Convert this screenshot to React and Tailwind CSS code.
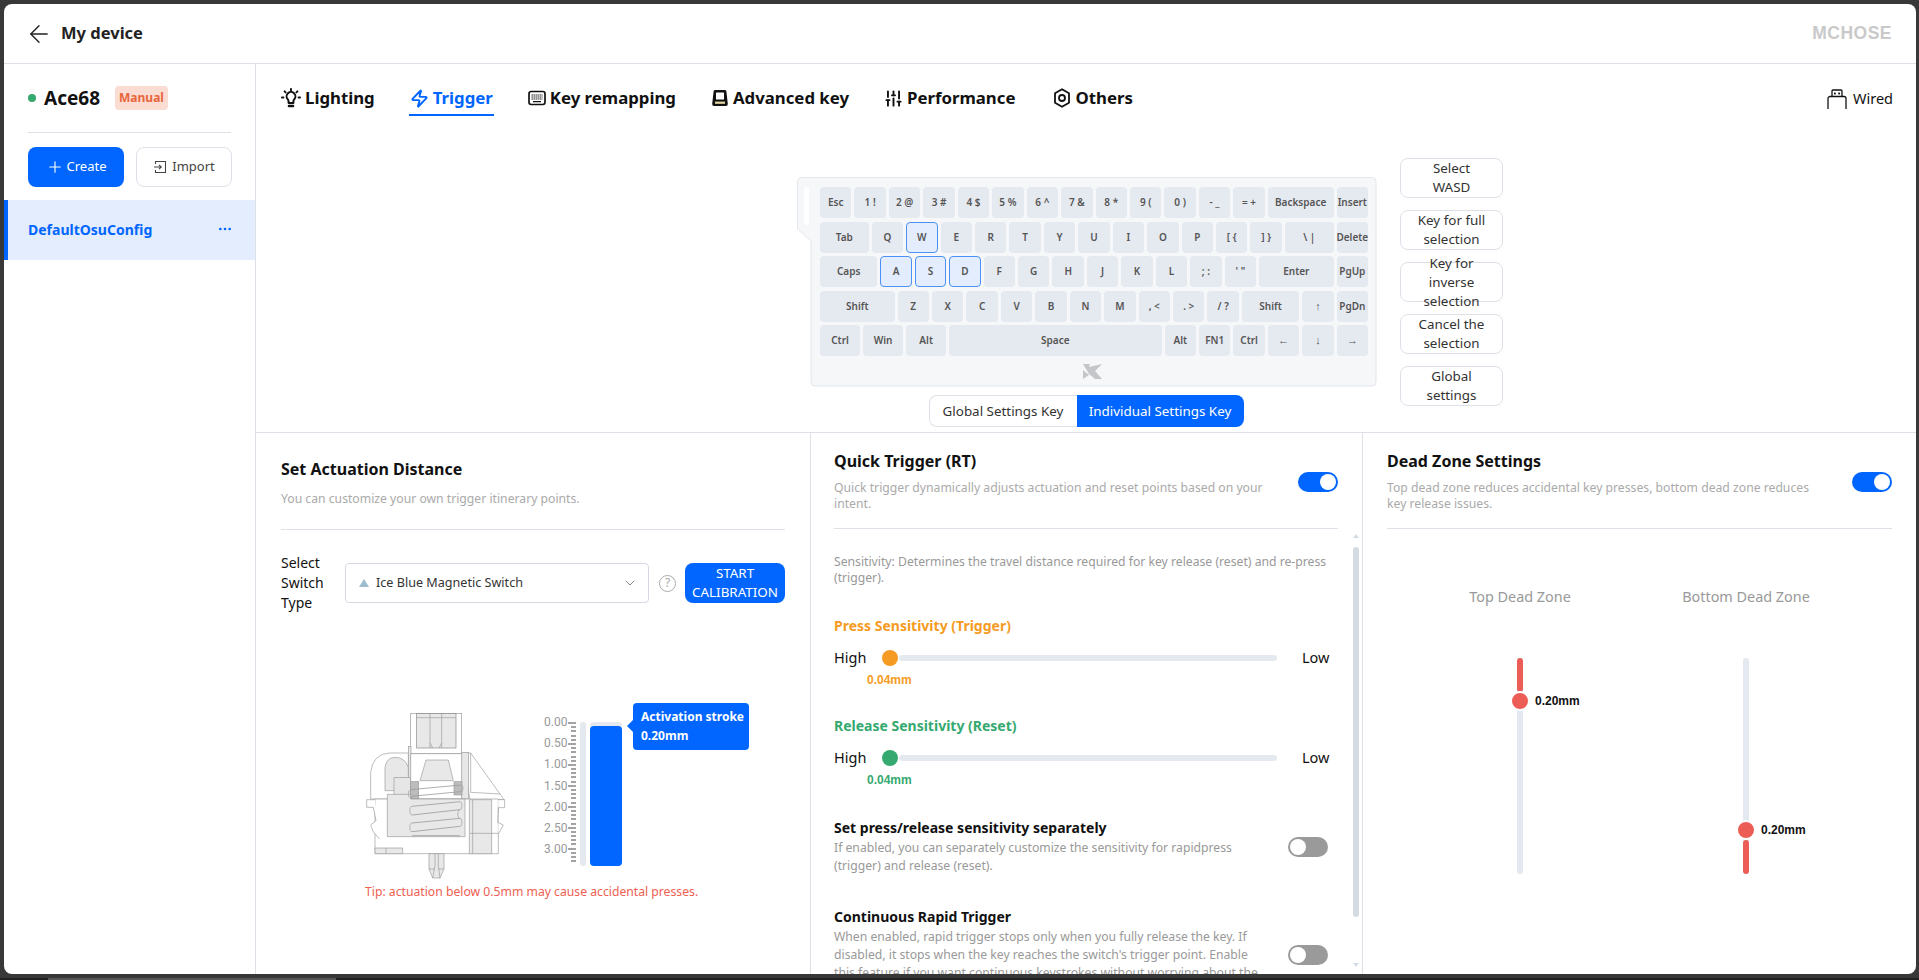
import React from 'react'
import { ArrowLeft, Plus, Zap, SlidersVertical, ChevronDown, Ellipsis } from 'lucide-react'

const UNIT = 34.45

const rows = [
  [['Esc'], ['1 !'], ['2 @'], ['3 #'], ['4 $'], ['5 %'], ['6 ^'], ['7 &'], ['8 *'], ['9 ('], ['0 )'], ['- _'], ['= +'], ['Backspace', 2], ['Insert']],
  [['Tab', 1.5], ['Q'], ['W', 1, true], ['E'], ['R'], ['T'], ['Y'], ['U'], ['I'], ['O'], ['P'], ['[ {'], ['] }'], ['\\ |', 1.5], ['Delete']],
  [['Caps', 1.75], ['A', 1, true], ['S', 1, true], ['D', 1, true], ['F'], ['G'], ['H'], ['J'], ['K'], ['L'], ['; :'], ["' \""], ['Enter', 2.25], ['PgUp']],
  [['Shift', 2.25], ['Z'], ['X'], ['C'], ['V'], ['B'], ['N'], ['M'], [', <'], ['. >'], ['/ ?'], ['Shift', 1.75], ['↑'], ['PgDn']],
  [['Ctrl', 1.25], ['Win', 1.25], ['Alt', 1.25], ['Space', 6.25], ['Alt'], ['FN1'], ['Ctrl'], ['←'], ['↓'], ['→']],
]

const arrows = ['←', '↓', '→', '↑']

function Toggle({ on, className = '' }) {
  return (
    <div className={`w-10 h-5 rounded-full flex items-center px-[2px] shrink-0 ${on ? 'bg-[#0066ff] justify-end' : 'bg-[#9a9a9a] justify-start'} ${className}`}>
      <div className="w-4 h-4 rounded-full bg-white" />
    </div>
  )
}

function BulbIcon() {
  return (
    <svg width="20" height="20" viewBox="0 0 20 20" fill="none" stroke="#111" strokeWidth="2" strokeLinecap="round" strokeLinejoin="round">
      <path d="M7.6 15v-1.6c0-1-.4-1.5-1-2.2a4.4 4.4 0 1 1 6.8 0c-.6.7-1 1.2-1 2.2V15z" />
      <path d="M8 18h4" strokeWidth="2.6" />
      <path d="M10 1v1.2M3.6 3.4l1 1M16.4 3.4l-1 1M1 9.6h1.4M17.6 9.6H19" />
    </svg>
  )
}

function KeyboardIcon() {
  return (
    <svg width="18" height="18" viewBox="0 0 18 18" fill="none">
      <rect x="1" y="2.5" width="16" height="13" rx="2.2" stroke="#111" strokeWidth="1.7" />
      <path d="M3.5 6h11M3.5 8h11M3.5 10h11" stroke="#111" strokeWidth="1.2" strokeDasharray="1.4 .6" />
      <path d="M5 12.6h8" stroke="#111" strokeWidth="1.4" />
    </svg>
  )
}

function KeycapIcon() {
  return (
    <svg width="18" height="18" viewBox="0 0 18 18" fill="none">
      <path d="M4.2 1h9.6a1.6 1.6 0 0 1 1.6 1.4l1.4 12.4A2 2 0 0 1 14.8 17H3.2a2 2 0 0 1-2-2.2L2.6 2.4A1.6 1.6 0 0 1 4.2 1z" fill="#111" />
      <rect x="5" y="3.5" width="8" height="7" rx=".6" fill="#fff" />
      <rect x="4" y="12.6" width="10" height="2.2" fill="#e8d9a8" />
    </svg>
  )
}

function HexIcon() {
  return (
    <svg width="18" height="20" viewBox="0 0 18 20" fill="none" stroke="#111" strokeWidth="1.8" strokeLinejoin="round">
      <path d="M9 1.2l7 4v9.6l-7 4-7-4V5.2z" />
      <circle cx="9" cy="10" r="3" />
    </svg>
  )
}

function UsbIcon() {
  return (
    <svg width="20" height="20" viewBox="0 0 20 20" fill="none" stroke="#111" strokeWidth="1.3">
      <path d="M5 7.5V2a1 1 0 0 1 1-1h8a1 1 0 0 1 1 1v5.5" />
      <path d="M1 20V9.5A2 2 0 0 1 3 7.5h14a2 2 0 0 1 2 2V20" />
      <rect x="7" y="3.6" width="1.8" height="1.8" fill="#111" stroke="none" />
      <rect x="11.2" y="3.6" width="1.8" height="1.8" fill="#111" stroke="none" />
    </svg>
  )
}

function ImportIcon() {
  return (
    <svg width="14" height="14" viewBox="0 0 14 14" fill="none" stroke="#444" strokeWidth="1.1">
      <path d="M2.5 4V1.5h10v11h-10V10" />
      <path d="M1 7h7M6 4.8L8.3 7 6 9.2" />
    </svg>
  )
}

function Tab({ icon, label, active, className = '' }) {
  return (
    <div className={`flex items-center gap-[4px] h-[34px] border-b-2 px-[1px] ${active ? 'border-[#0066ff] text-[#0066ff]' : 'border-transparent text-[#111]'} ${className}`}>
      {icon}
      <span className="text-[16.8px] font-bold">{label}</span>
    </div>
  )
}

function SwitchDrawing() {
  const line = '#9b9b9b'
  return (
    <svg width="140" height="166" viewBox="78 62 420 498" fill="none" stroke={line} strokeWidth="2">
      <rect x="212" y="64" width="153" height="120" fill="#fff" />
      <rect x="230" y="64" width="118" height="103" fill="#e8e8e8" stroke="#888" />
      <path d="M270 64v103M305 64v103M230 76h118M270 152l8 15M305 152l-8 15" />
      <path d="M92 320V240Q98 184 150 182H205V320z" fill="#fff" />
      <path d="M135 295V225Q140 195 165 195Q195 195 205 225V295z" fill="#e8e8e8" />
      <path d="M365 182H392L480 305L492 322H390z" fill="#fff" />
      <path d="M392 182V300L480 305" />
      <rect x="205" y="162" width="8" height="158" fill="#e8e8e8" />
      <rect x="365" y="180" width="20" height="140" fill="#e8e8e8" />
      <path d="M212 184H365V320H212z" fill="#fff" />
      <path d="M240 265L258 203H325L340 265z" fill="#e8e8e8" />
      <rect x="162" y="256" width="50" height="62" fill="#e6e6e6" />
      <rect x="212" y="268" width="24" height="50" fill="#bcbcbc" />
      <rect x="342" y="268" width="24" height="40" fill="#bcbcbc" />
      <path d="M105 320H475V484H105z" fill="#fff" />
      <path d="M142 306H212V320H375V433H142z" fill="#e8e8e8" />
      <path d="M388 322H455V484H388z" fill="#e8e8e8" />
      <path d="M398 322V484M390 423H475" />
      <path d="M212 292L362 278M212 312L362 298M216 342L360 328M216 368L360 352M216 392L360 378M216 418L360 402M216 430L360 430" strokeWidth="2.4" />
      <path d="M212 292a6 8 0 0 0 4 24M362 278a6 8 0 0 1 0 20M216 342a6 12 0 0 0 0 26M360 352a6 12 0 0 0 0 26M216 392a6 12 0 0 0 0 26M360 328a6 12 0 0 1 0 24M360 378a6 12 0 0 1 0 24" />
      <path d="M105 322H80V345H100L108 385L92 398L100 418L118 440" fill="#fff" />
      <path d="M475 322H494V346H475L473 390L490 398L475 425" fill="#fff" />
      <path d="M105 467H188V484H105zM138 467V484" fill="#e8e8e8" />
      <path d="M267 484V530L278 557H300L312 530V484z" fill="#e8e8e8" />
      <path d="M285 484V520L278 557M295 484V520L300 557M267 530H285M295 530H312" />
    </svg>
  )
}

function Ruler() {
  const labels = ['0.00', '0.50', '1.00', '1.50', '2.00', '2.50', '3.00']
  const ticks = Array.from({ length: 34 })
  return (
    <div className="flex h-[149px] mr-[3px]">
      <div className="flex flex-col w-[24px] text-[12px] leading-[21.2px] text-[#999] -mt-[10px] font-['Roboto',sans-serif]">
        {labels.map((l) => <span key={l}>{l}</span>)}
      </div>
      <div className="flex flex-col items-end w-[8px] gap-[2.2px] h-[144px] overflow-hidden">
        {ticks.map((_, i) => (
          <div key={i} className={`h-[2px] bg-[#a3a3a3] ${i % 5 === 0 ? 'w-[8px]' : 'w-[5px]'}`} />
        ))}
      </div>
    </div>
  )
}

function SensitivitySlider({ title, color, textColor }) {
  return (
    <div>
      <div className={`text-[14px] font-bold leading-5 ${textColor}`}>{title}</div>
      <div className="flex items-center h-5 mt-[12px]">
        <span className="text-[14.5px] text-[#111] w-[48px]">High</span>
        <div className={`w-4 h-4 rounded-full ${color}`} />
        <div className="w-[378px] h-[6px] ml-[1px] rounded-full bg-[#e4e8ef]" />
        <span className="text-[14.5px] text-[#111] ml-[25px]">Low</span>
      </div>
      <div className={`text-[12px] font-bold leading-4 mt-[4px] ml-[33px] font-['Liberation_Sans',sans-serif] ${textColor}`}>0.04mm</div>
    </div>
  )
}

function DeadZone({ title, top }) {
  return (
    <div className="flex flex-col items-center w-[200px]">
      <div className="text-[14.4px] text-[#999] leading-5">{title}</div>
      <div className="relative w-[6px] h-[216px] mt-[51px] rounded-full bg-[#e4e8ef]">
        <div className={`absolute left-0 w-[6px] h-[34px] rounded-full bg-[#ec5d55] ${top ? 'top-0' : 'bottom-0'}`} />
        <div className={`absolute -left-[7px] w-5 h-5 rounded-full bg-[#ec5d55] border-2 border-white ${top ? 'top-[33px]' : 'top-[162px]'}`} />
        <div className={`absolute left-[18px] w-[60px] text-[12px] font-bold leading-4 text-[#111] font-['Liberation_Sans',sans-serif] ${top ? 'top-[35px]' : 'top-[164px]'}`}>0.20mm</div>
      </div>
    </div>
  )
}

export default function App() {
  return (
    <div className="w-[1919px] h-[980px] bg-[#383838] flex flex-col overflow-hidden font-['Noto_Sans',sans-serif]">
      <div className="ml-[4px] mr-[3px] mt-[4px] h-[970px] bg-white rounded-lg overflow-hidden flex flex-col">
        {/* header */}
        <div className="h-[60px] shrink-0 border-b border-[#dde1e7] flex items-center pl-[21px] pr-[24px]">
          <ArrowLeft size={28} strokeWidth={1.2} color="#222" />
          <span className="ml-[8px] text-[16.5px] font-bold text-[#222]">My device</span>
          <span className="ml-auto text-[17.5px] font-bold tracking-[0.5px] text-[#c9c9c9] font-['Liberation_Sans',sans-serif]">MCHOSE</span>
        </div>

        <div className="flex flex-1 min-h-0">
          {/* sidebar */}
          <div className="w-[252px] shrink-0 border-r border-[#dde1e7]">
            <div className="px-[24px]">
              <div className="flex items-center h-[24px] mt-[22px]">
                <div className="w-2 h-2 rounded-full bg-[#35a96f]" />
                <span className="ml-[8px] text-[19px] font-bold text-[#111]">Ace68</span>
                <span className="ml-[15px] h-[24px] px-[4px] rounded bg-[#fbdcd2] text-[#e8663c] text-[12px] font-bold leading-[24px]">Manual</span>
              </div>
              <div className="mt-[22px] h-px bg-[#dde1e7] w-[203px]" />
              <div className="flex gap-[12px] mt-[14px] w-[204px]">
                <div className="w-[96px] h-[40px] rounded-lg bg-[#0066ff] text-white text-[13px] flex items-center justify-center gap-[3px]">
                  <Plus size={18} strokeWidth={1.5} />Create
                </div>
                <div className="w-[96px] h-[40px] rounded-lg border border-[#dde1e7] text-[#444] text-[13px] flex items-center justify-center gap-[5px]">
                  <ImportIcon />Import
                </div>
              </div>
            </div>
            <div className="mt-[13px] h-[60px] bg-[#e3edfd] border-l-4 border-[#0066ff] flex items-center pl-[20px] pr-[22px] pb-[2px]">
              <span className="text-[14px] font-bold text-[#0066ff]">DefaultOsuConfig</span>
              <Ellipsis size={16} color="#0066ff" className="ml-auto" />
            </div>
          </div>

          <div className="flex-1 min-w-0 flex flex-col">
            {/* tabs + keyboard */}
            <div className="h-[368px] shrink-0 pl-[24px] pr-[23px]">
              <div className="flex items-center gap-[33px] pt-[18px]">
                <Tab icon={<BulbIcon />} label="Lighting" />
                <Tab icon={<Zap size={19} strokeWidth={2.4} />} label="Trigger" active />
                <Tab icon={<KeyboardIcon />} label="Key remapping" />
                <Tab icon={<KeycapIcon />} label="Advanced key" />
                <Tab icon={<SlidersVertical size={19} strokeWidth={2.4} color="#111" />} label="Performance" />
                <Tab icon={<HexIcon />} label="Others" className="ml-[3px]" />
                <div className="ml-auto flex items-center gap-[6px] text-[14.5px] text-[#111]"><UsbIcon />Wired</div>
              </div>

              <div className="flex ml-[517px] mt-[61px]">
                <div className="flex flex-col items-center">
                  <div className="relative w-[580px] h-[210px] pl-[23px] pt-[10px]">
                    <svg className="absolute left-0 top-0" width="580" height="210" viewBox="0 0 580 210" fill="none">
                      <path d="M5 .5H575a4 4 0 0 1 4 4V205a4 4 0 0 1-4 4H18a4 4 0 0 1-4-4V64L.5 52V5a4 4 0 0 1 4-4.5z" fill="#f6f7f9" stroke="#e3e6eb" />
                      <rect x="7" y="10" width="5" height="38" rx="2.5" fill="#fff" />
                      <path d="M286 187h7l-1 3 13-3-7 7 7 8h-7l-6-5zM286 193l6 5-6 4z" fill="#c4c6c9" />
                    </svg>
                    <div className="relative flex flex-col gap-[3.5px]">
                      {rows.map((row, r) => (
                        <div key={r} className="flex gap-[3px] h-[31px]">
                          {row.map(([label, u = 1, sel], i) => (
                            <div
                              key={i}
                              style={{ width: u * UNIT - 3 }}
                              className={`shrink-0 rounded flex items-center justify-center font-semibold text-[#555] ${arrows.includes(label) ? "text-[11px] font-['Liberation_Sans',sans-serif]" : 'text-[10px]'} ${sel ? 'bg-[#e3edfd] border border-[#4a90f5]' : 'bg-[#e5e9f0]'}`}
                            >
                              {label}
                            </div>
                          ))}
                        </div>
                      ))}
                    </div>
                  </div>
                  <div className="flex mt-[8px] h-[32px] text-[13.4px] -ml-[2px]">
                    <div className="w-[148px] rounded-l-lg border border-r-0 border-[#dde1e7] flex items-center justify-center text-[#333]">Global Settings Key</div>
                    <div className="w-[167px] rounded-r-lg bg-[#0066ff] text-white flex items-center justify-center">Individual Settings Key</div>
                  </div>
                </div>
                <div className="flex flex-col gap-[12px] ml-[23px] -mt-[19px]">
                  {['Select WASD', 'Key for full selection', 'Key for inverse selection', 'Cancel the selection', 'Global settings'].map((t) => (
                    <div key={t} className="w-[103px] h-[40px] rounded-lg border border-[#dde1e7] flex items-center justify-center text-center text-[13.4px] leading-[19px] text-[#333] px-[14px]">
                      {t}
                    </div>
                  ))}
                </div>
              </div>
            </div>

            {/* settings panels */}
            <div className="flex-1 min-h-0 flex border-t border-[#dde1e7]">
              <div className="w-[555px] shrink-0 border-r border-[#dde1e7] px-[25px]">
                <div className="text-[16px] font-bold text-[#111] leading-6 mt-[24px]">Set Actuation Distance</div>
                <div className="text-[12.2px] text-[#aaa] leading-4 mt-[10px]">You can customize your own trigger itinerary points.</div>
                <div className="h-px bg-[#dde1e7] mt-[22px]" />
                <div className="flex items-center mt-[23px] h-[60px]">
                  <div className="w-[64px] text-[14px] leading-5 text-[#111]">Select Switch Type</div>
                  <div className="w-[304px] h-[40px] rounded border border-[#d5dae2] flex items-center pl-[13px] pr-[10px]">
                    <div className="w-0 h-0 border-l-[5px] border-r-[5px] border-b-[8px] border-l-transparent border-r-transparent border-b-[#9dbccd]" />
                    <span className="ml-[7px] text-[12.6px] text-[#333]">Ice Blue Magnetic Switch</span>
                    <ChevronDown size={16} strokeWidth={1.2} color="#666" className="ml-auto" />
                  </div>
                  <div className="ml-[10px] w-[17px] h-[17px] rounded-full border border-[#aaa] text-[#aaa] text-[12px] flex items-center justify-center">?</div>
                  <div className="ml-[9px] w-[100px] h-[40px] rounded-lg bg-[#0066ff] text-white text-[13.4px] leading-[19px] text-center flex items-center justify-center">START CALIBRATION</div>
                </div>
                <div className="flex items-start mt-[100px] ml-[85px]">
                  <SwitchDrawing />
                  <div className="flex items-start ml-[38px] mt-[9px]">
                    <Ruler />
                    <div className="w-[6px] h-[144px] rounded-full bg-[#e4e8ef] ml-[1px]" />
                    <div className="w-[32px] h-[144px] ml-[4px] rounded bg-[#e4e8ef] pt-[4px]">
                      <div className="h-[140px] rounded bg-[#0066ff]" />
                    </div>
                    <div className="relative ml-[11px] -mt-[19px] w-[116px] h-[47px] rounded bg-[#0066ff] text-white text-[12px] font-bold leading-[19px] pl-[8px] pt-[4px]">
                      <div className="absolute -left-[6px] top-[17px] w-0 h-0 border-y-[6px] border-r-[6px] border-y-transparent border-r-[#0066ff]" />
                      <div>Activation stroke</div>
                      <div>0.20mm</div>
                    </div>
                  </div>
                </div>
                <div className="text-[12.2px] text-[#ee5e52] leading-4 mt-[5px] ml-[84px]">Tip: actuation below 0.5mm may cause accidental presses.</div>
              </div>

              <div className="w-[552px] shrink-0 border-r border-[#dde1e7] flex flex-col min-h-0">
                <div className="mx-[23px] w-[504px] h-[96px] shrink-0 border-b border-[#dde1e7] flex justify-between">
                  <div className="w-[445px]">
                    <div className="text-[16px] font-bold text-[#111] leading-6 mt-[16px]">Quick Trigger (RT)</div>
                    <div className="text-[12.2px] text-[#aaa] leading-4 mt-[7px]">Quick trigger dynamically adjusts actuation and reset points based on your intent.</div>
                  </div>
                  <Toggle on className="mt-[39px]" />
                </div>
                <div className="flex-1 min-h-0 flex overflow-hidden">
                  <div className="w-[541px] pl-[23px] pr-[22px] shrink-0">
                    <div className="text-[12.2px] text-[#999] leading-4 mt-[25px]">Sensitivity: Determines the travel distance required for key release (reset) and re-press (trigger).</div>
                    <div className="mt-[30px]"><SensitivitySlider title="Press Sensitivity (Trigger)" color="bg-[#f59b23]" textColor="text-[#f59b23]" /></div>
                    <div className="mt-[28px]"><SensitivitySlider title="Release Sensitivity (Reset)" color="bg-[#35a96f]" textColor="text-[#35a96f]" /></div>
                    <div className="flex justify-between mt-[30px]">
                      <div className="w-[430px]">
                        <div className="text-[14px] font-bold text-[#111] leading-5">Set press/release sensitivity separately</div>
                        <div className="text-[12.2px] text-[#999] leading-[18px] mt-[1px]">If enabled, you can separately customize the sensitivity for rapidpress (trigger) and release (reset).</div>
                      </div>
                      <Toggle className="mr-[2px] self-center" />
                    </div>
                    <div className="flex justify-between mt-[32px]">
                      <div className="w-[430px]">
                        <div className="text-[14px] font-bold text-[#111] leading-5">Continuous Rapid Trigger</div>
                        <div className="text-[12.2px] text-[#999] leading-[18px] mt-[1px]">When enabled, rapid trigger stops only when you fully release the key. If disabled, it stops when the key reaches the switch's trigger point. Enable this feature if you want continuous keystrokes without worrying about the actuation depth.</div>
                      </div>
                      <Toggle className="mt-[38px] mr-[2px]" />
                    </div>
                  </div>
                  <div className="w-[8px] flex flex-col items-center pt-[5px]">
                    <div className="w-0 h-0 border-x-[3px] border-b-[4px] border-x-transparent border-b-[#d5dbe3]" />
                    <div className="w-[6px] h-[370px] mt-[9px] rounded-full bg-[#d5dbe3]" />
                    <div className="w-0 h-0 mt-[46px] border-x-[3px] border-t-[4px] border-x-transparent border-t-[#d5dbe3]" />
                  </div>
                </div>
              </div>

              <div className="flex-1 min-w-0 pl-[24px] pr-[25px]">
                <div className="h-[96px] w-[505px] border-b border-[#dde1e7] flex justify-between">
                  <div className="w-[432px]">
                    <div className="text-[16px] font-bold text-[#111] leading-6 mt-[16px]">Dead Zone Settings</div>
                    <div className="text-[12.2px] text-[#aaa] leading-4 mt-[7px]">Top dead zone reduces accidental key presses, bottom dead zone reduces key release issues.</div>
                  </div>
                  <Toggle on className="mt-[39px]" />
                </div>
                <div className="flex mt-[58px] ml-[33px] gap-[26px]">
                  <DeadZone title="Top Dead Zone" top />
                  <DeadZone title="Bottom Dead Zone" />
                </div>
              </div>
            </div>
          </div>
        </div>
      </div>
      <div className="flex-1 relative">
        <div className="absolute left-0 right-0 bottom-0 h-[2px] bg-[#222]" />
        <div className="absolute left-[48px] w-[288px] bottom-0 h-[2px] bg-[#555]" />
      </div>
    </div>
  )
}
